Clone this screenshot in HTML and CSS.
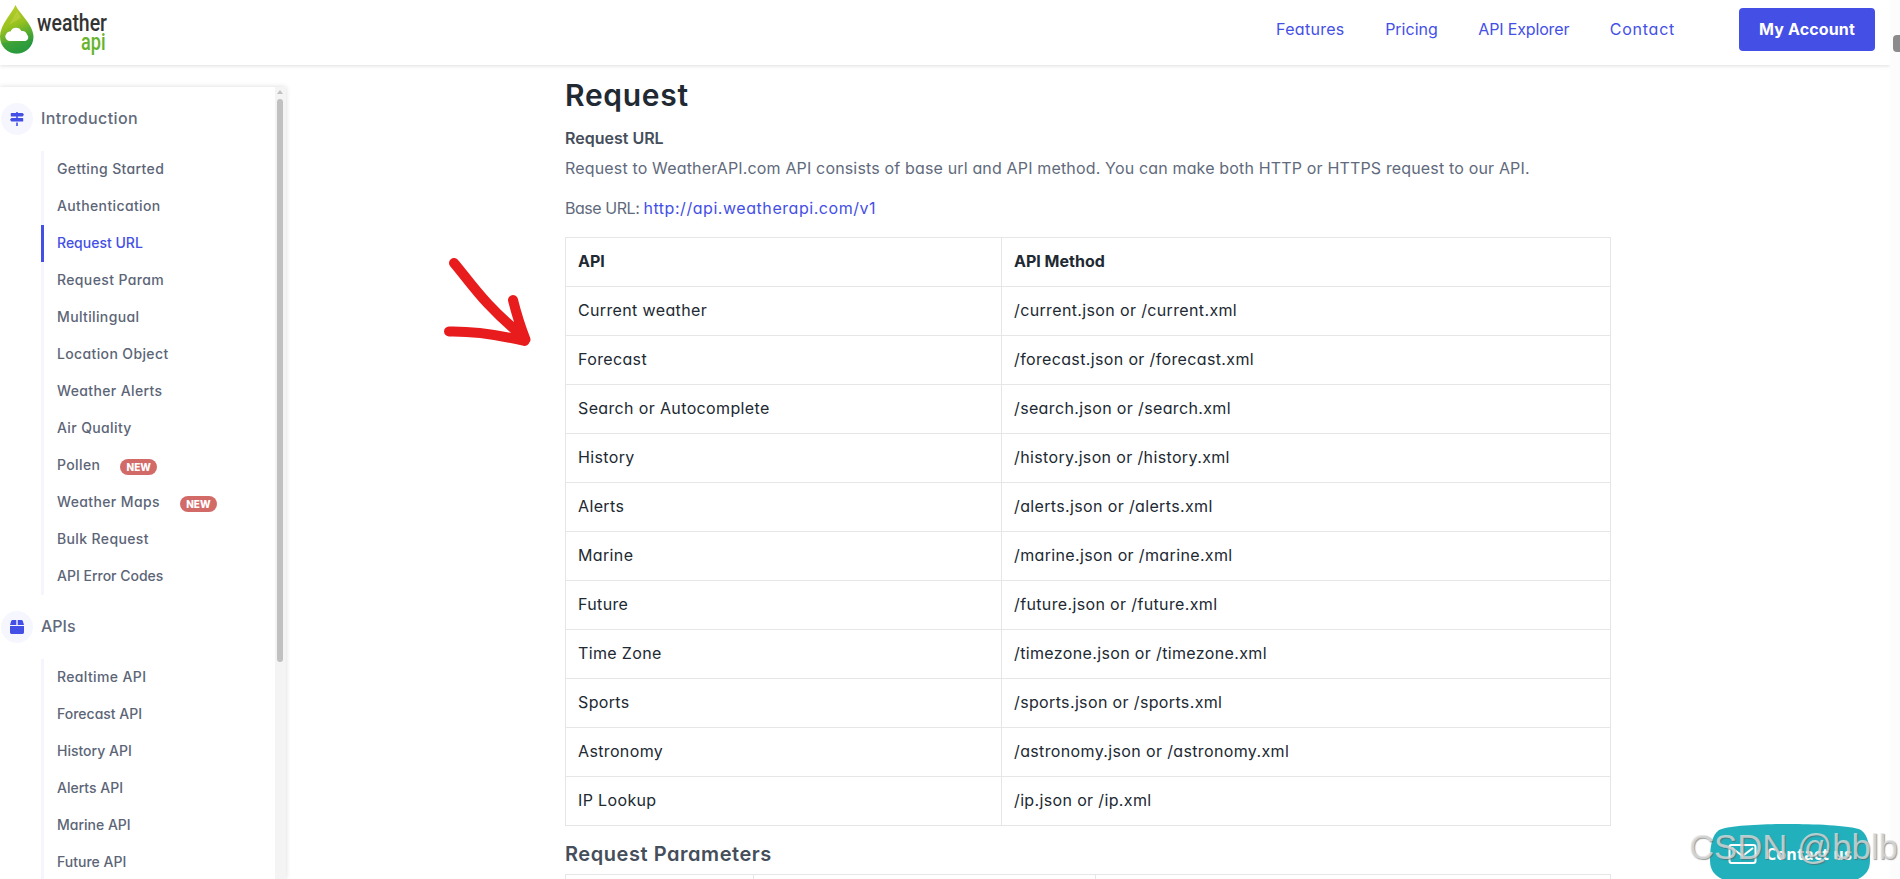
FILE: index.html
```html
<!DOCTYPE html>
<html lang="en">
<head>
    <meta charset="UTF-8">
    <meta name="viewport" content="width=device-width, initial-scale=1.0">
    <title>Weather API Docs</title>
    <link rel="stylesheet" href="styles.css">
</head>
<body>
    <header class="header">
        <a class="logo" href="#">
            <svg width="112" height="60" viewBox="0 0 112 60">
                <defs>
                    <linearGradient id="drop" x1="0" y1="0" x2="0.3" y2="1">
                        <stop offset="0" stop-color="#c3d02c"/>
                        <stop offset="0.5" stop-color="#95c11f"/>
                        <stop offset="0.75" stop-color="#55ab30"/>
                        <stop offset="1" stop-color="#1f9440"/>
                    </linearGradient>
                </defs>
                <path d="M15.500 5C12 13 0 25 0 36.500C0 46.500 7.500 53.500 16.700 53.500C26 53.500 33.500 46.500 33.500 36.500C33.500 25 19 13 15.500 5Z" fill="url(#drop)"/>
                <path d="M17 11L9 25L21 18Z" fill="#d3da52" opacity="0.4"/>
                <path d="M2 43L31 41C29 49 24 53.500 16.700 53.500C9 53.500 4 49 2 43Z" fill="#36a03a" opacity="0.6"/>
                <path d="M9 41A4.500 4.500 0 0 1 6.500 33.600A4 4 0 0 1 10.500 31.500A6 6 0 0 1 21.500 31A5 5 0 0 1 27 34.500A3.800 3.800 0 0 1 25.500 41Z" fill="#fff"/>
                <text class="logo-text" x="37" y="31" textLength="70" lengthAdjust="spacingAndGlyphs">weather</text>
                <text class="logo-text logo-api" x="81" y="50.300" textLength="24.500" lengthAdjust="spacingAndGlyphs">api</text>
            </svg>
        </a>
        <nav class="nav">
            <a class="nav-features" href="#">Features</a>
            <a class="nav-pricing" href="#">Pricing</a>
            <a class="nav-explorer" href="#">API Explorer</a>
            <a class="nav-contact" href="#">Contact</a>
        </nav>
        <a class="account" href="#">My Account</a>
    </header>

    <div class="page">
        <aside class="sidebar">
            <div class="menu">
                <div class="menu-title">
                    <span class="menu-icon">
                        <svg width="14" height="14" viewBox="0 0 14 14"><path d="M6.200 0H7.800V1H12.600L14 2.700L12.600 4.500H1.400Q.8 4.500.8 3.900V1.600Q.8 1 1.400 1H6.200ZM6.200 4.500H7.800V6H12.600Q13.200 6 13.200 6.600V8.900Q13.200 9.500 12.600 9.500H1.400L0 7.700L1.400 6H6.200ZM6.200 10.500H7.800V14H6.200Z"/></svg>
                    </span>
                    <b>Introduction</b>
                </div>
                <ul class="menu-list">
                    <li><a href="#">Getting Started</a></li>
                    <li><a href="#">Authentication</a></li>
                    <li class="active tight"><a href="#">Request URL</a></li>
                    <li><a href="#">Request Param</a></li>
                    <li><a href="#">Multilingual</a></li>
                    <li><a href="#">Location Object</a></li>
                    <li><a href="#">Weather Alerts</a></li>
                    <li><a href="#">Air Quality</a></li>
                    <li><a href="#">Pollen</a><span class="badge">NEW</span></li>
                    <li><a href="#">Weather Maps</a><span class="badge">NEW</span></li>
                    <li><a href="#">Bulk Request</a></li>
                    <li class="tight"><a href="#">API Error Codes</a></li>
                </ul>
                <div class="menu-title tight">
                    <span class="menu-icon">
                        <svg width="14" height="14" viewBox="0 0 14 14"><path d="M2.600 0H6.300V5H0L1.200 1Q1.500 0 2.600 0ZM7.700 0H11.400Q12.500 0 12.800 1L14 5H7.700ZM0 6H14V12.600Q14 14 12.600 14H1.400Q0 14 0 12.600Z"/></svg>
                    </span>
                    <b>APIs</b>
                </div>
                <ul class="menu-list">
                    <li><a href="#">Realtime API</a></li>
                    <li class="tight"><a href="#">Forecast API</a></li>
                    <li class="tight"><a href="#">History API</a></li>
                    <li class="tight"><a href="#">Alerts API</a></li>
                    <li class="tight"><a href="#">Marine API</a></li>
                    <li class="tight"><a href="#">Future API</a></li>
                </ul>
            </div>
            <div class="menu-scroll">
                <div class="scroll-up"></div>
                <div class="scroll-thumb"></div>
            </div>
        </aside>

        <main class="content">
            <h2>Request</h2>
            <h6>Request URL</h6>
            <p>Request to WeatherAPI.com API consists of base url and API method. You can make both HTTP or HTTPS request to our API.</p>
            <p class="base-url">Base URL: <a href="#">http://api.weatherapi.com/v1</a></p>
            <table class="table api-table">
                <tr><th>API</th><th>API Method</th></tr>
                <tr><td>Current weather</td><td>/current.json or /current.xml</td></tr>
                <tr><td>Forecast</td><td>/forecast.json or /forecast.xml</td></tr>
                <tr><td>Search or Autocomplete</td><td>/search.json or /search.xml</td></tr>
                <tr><td>History</td><td>/history.json or /history.xml</td></tr>
                <tr><td>Alerts</td><td>/alerts.json or /alerts.xml</td></tr>
                <tr><td>Marine</td><td>/marine.json or /marine.xml</td></tr>
                <tr><td>Future</td><td>/future.json or /future.xml</td></tr>
                <tr><td>Time Zone</td><td>/timezone.json or /timezone.xml</td></tr>
                <tr><td>Sports</td><td>/sports.json or /sports.xml</td></tr>
                <tr><td>Astronomy</td><td>/astronomy.json or /astronomy.xml</td></tr>
                <tr><td>IP Lookup</td><td>/ip.json or /ip.xml</td></tr>
            </table>
            <h5>Request Parameters</h5>
            <table class="table param-table">
                <tr><td></td><td></td><td></td></tr>
            </table>
        </main>
    </div>

    <svg class="arrow" width="100" height="100" viewBox="0 0 100 100">
        <path d="M14 13C31 33 45 56 84 87M73 50C76 62 79 73 85.500 89.500M9 81.500C34 81 55 84 84.500 91"/>
    </svg>

    <div class="page-scroll"><div class="page-thumb"></div></div>

    <div class="contact">
        <svg width="160" height="55" viewBox="0 0 160 55">
            <path class="contact-bg" d="M0 36C0 22 2 11 9 6C20 1 60 0 80 0S140 1 151 6C158 11 160 22 160 36C160 46 156 51 148 55H12C4 51 0 46 0 36Z"/>
            <rect class="contact-line" x="19.500" y="21" width="26" height="18" rx="2"/>
            <path class="contact-line" d="M22 24L32.500 32L43 24"/>
        </svg>
        <span>Contact us</span>
    </div>
    <div class="watermark">CSDN @bblb</div>
</body>
</html>
```
FILE: styles.css
```css
body {
    margin: 0;
    height: 879px;
    overflow: hidden;
    font-family: Inter, "Open Sans", sans-serif;
    font-feature-settings: "cv11";
    font-size: 16px;
    color: #616a7c;
    background: #fff;
}
a {
    color: #444fe6;
    text-decoration: none;
}
.header {
    display: flex;
    align-items: flex-start;
    position: relative;
    height: 65px;
    width: 1890px;
    background: #fff;
    box-shadow: 0 1px 4px rgba(0, 0, 0, 0.13);
}
.logo {
    flex: 1;
}
.logo-text {
    font-family: Roboto, sans-serif;
    font-size: 24px;
    font-weight: 500;
    fill: #333;
}
.logo-api {
    fill: #66b32e;
}
.nav {
    display: flex;
    gap: 40.5px;
    line-height: 58px;
    margin-right: 64px;
}
.nav-features {
    letter-spacing: 0.3px;
}
.nav-explorer {
    letter-spacing: -0.15px;
}
.nav-contact {
    letter-spacing: 0.75px;
}
.account {
    width: 136px;
    height: 43px;
    margin: 8px 15px 0 0;
    line-height: 43px;
    text-align: center;
    font-weight: 700;
    letter-spacing: 0.15px;
    color: #fff;
    background: #444fe6;
    border-radius: 4px;
}
.page {
    display: flex;
    gap: 279px;
    height: 814px;
    overflow: hidden;
}
.sidebar {
    display: flex;
    width: 286px;
    height: 792px;
    margin-top: 22px;
    box-shadow: 0 0 5px rgba(0, 0, 0, 0.15);
}
.menu {
    flex: 1;
    padding-top: 16px;
    letter-spacing: 0.37px;
}
.tight {
    letter-spacing: 0;
}
.menu-title {
    display: flex;
    align-items: center;
    gap: 8px;
    height: 32px;
    padding-left: 1px;
}
.menu-title b {
    padding-bottom: 2px;
    font-weight: 500;
}
.menu-icon {
    display: flex;
    align-items: center;
    justify-content: center;
    width: 32px;
    height: 32px;
    border-radius: 50%;
    background: #f6f6fe;
    fill: #444fe6;
}
.menu-list {
    list-style: none;
    margin: 16px 0 16px 41px;
    padding: 0;
}
.menu-list li {
    display: flex;
    align-items: center;
    height: 37px;
    padding-left: 13px;
    border-left: 3px solid #f5f5fe;
    font-size: 14px;
    font-weight: 500;
}
.menu-list a {
    padding-bottom: 2px;
    color: #5c6577;
}
.menu-list .active {
    border-color: #444fe6;
}
.menu-list .active a {
    color: #444fe6;
}
.badge {
    width: 37px;
    height: 16px;
    margin: 3px 0 0 20px;
    line-height: 16px;
    border-radius: 8px;
    background: #d26b68;
    color: #fff;
    font-size: 10px;
    font-weight: 800;
    letter-spacing: 0;
    text-align: center;
}
.menu-scroll {
    width: 11px;
    background: #f4f4f4;
}
.scroll-up {
    width: 0;
    margin: 3px 0 5px 2px;
    border: 3px solid transparent;
    border-top: 0;
    border-bottom: 4px solid #c1c1c1;
}
.scroll-thumb {
    width: 6px;
    height: 563px;
    margin-left: 2px;
    border-radius: 3px;
    background: #c1c1c1;
}
.content {
    width: 1046px;
}
.content h2 {
    margin: 11px 0 0;
    font-size: 30px;
    line-height: 38px;
    font-weight: 600;
    letter-spacing: 0.7px;
    color: #212932;
}
.content h6 {
    margin: 12px 0 0;
    font-size: 16px;
    line-height: 24px;
    font-weight: 600;
    color: #454e5b;
}
.content h5 {
    margin: 15px 0 7px;
    font-size: 20px;
    line-height: 26px;
    font-weight: 600;
    letter-spacing: 0.55px;
    color: #454e5b;
}
.content p {
    margin: 4px 0 14px;
    line-height: 28px;
    letter-spacing: 0.16px;
}
.content .base-url {
    margin: 0 0 17px;
    line-height: 24px;
    letter-spacing: -0.45px;
}
.base-url a {
    letter-spacing: 0.55px;
}
.table {
    width: 1046px;
    table-layout: fixed;
    border-collapse: collapse;
    color: #212932;
}
.table th, .table td {
    box-sizing: border-box;
    height: 49px;
    padding: 0 11px 2px 12px;
    border: 1px solid #e6e6e9;
    text-align: left;
}
.table td {
    letter-spacing: 0.36px;
}
.api-table th:first-child {
    width: 436px;
}
.param-table td:first-child {
    width: 188px;
}
.param-table td:nth-child(2) {
    width: 342px;
}
.arrow {
    position: absolute;
    left: 440px;
    top: 250px;
    fill: none;
    stroke: #e81c1c;
    stroke-width: 10;
    stroke-linecap: round;
    stroke-linejoin: round;
}
.page-scroll {
    position: absolute;
    top: 0;
    right: 0;
    width: 10px;
    height: 879px;
    background: #fcfcfc;
}
.page-thumb {
    width: 7px;
    height: 17px;
    margin: 35px 0 0 3px;
    border-radius: 4px 0 0 4px;
    background: #8b8b8b;
}
.contact {
    position: absolute;
    left: 1710px;
    top: 824px;
    height: 55px;
    overflow: hidden;
}
.contact-bg {
    fill: #22b1bc;
}
.contact-line {
    fill: none;
    stroke: #fff;
    stroke-width: 2;
}
.contact span {
    position: absolute;
    left: 56px;
    top: 20px;
    font: 700 16px/20px "Open Sans", sans-serif;
    letter-spacing: 0.1px;
    color: #fff;
    white-space: nowrap;
}
.watermark {
    position: absolute;
    left: 1689px;
    top: 827px;
    font: 34.7px/40px "Liberation Sans", Arial, sans-serif;
    color: rgba(225, 225, 225, 0.75);
    text-shadow: 1px 1px 1px rgba(90, 90, 90, 0.6);
    white-space: nowrap;
}
```
